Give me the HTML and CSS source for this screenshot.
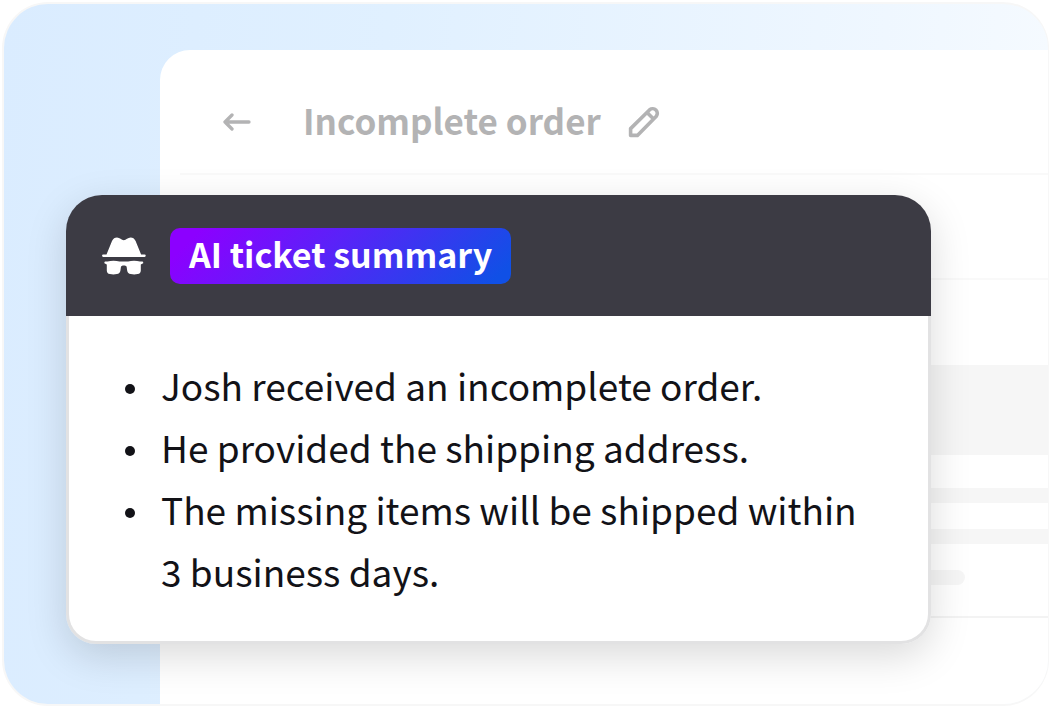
FILE: index.html
```
<!DOCTYPE html>
<html lang="en">
<head>
    <meta charset="UTF-8">
    <meta name="viewport" content="width=device-width, initial-scale=1.0">
    <title>AI ticket summary</title>
    <link rel="stylesheet" href="styles.css">
</head>
<body>
    <main class="stage">
        <section class="ticket">
            <header class="ticket-header">
                <button class="icon-btn back" type="button" aria-label="Back">
                    <svg width="28" height="18" viewBox="0 0 28 18" fill="none" stroke="currentColor" stroke-width="3.300" stroke-linecap="round" stroke-linejoin="round">
                        <path d="M26 9H2M9 2L2 9l7 7"/>
                    </svg>
                </button>
                <h1>Incomplete order</h1>
                <button class="icon-btn edit" type="button" aria-label="Edit title">
                    <svg width="32" height="32" viewBox="0 0 32 32" fill="none" stroke="currentColor" stroke-width="3.600" stroke-linejoin="round">
                        <path d="M2.600 29.400V22.600L21.700 3.700a4.700 4.700 0 0 1 6.600 6.600L9.400 29.400zM19 6.400L25.600 13"/>
                    </svg>
                </button>
            </header>
            <div class="row"></div>
            <div class="row message">
                <div class="block"></div>
                <div class="line"></div>
                <div class="line"></div>
                <div class="line short"></div>
            </div>
        </section>

        <section class="summary">
            <header class="summary-header">
                <svg width="44" height="40" viewBox="0 0 44 40" fill="#fff">
                    <path d="M1.200 18.600H4.500L10 5C11.200 2.500 12.800 1.500 15 1.500c2.800 0 4.400 2.700 6.800 2.700s4-2.700 6.800-2.700c2.200 0 3.800 1 5 3.500L39.100 18.600h3.500a1.100 1.100 0 0 1 0 2.300H1.200a1.100 1.100 0 0 1 0-2.300z"/>
                    <path d="M3.300 25.600H5.600C9 24.600 14 24.600 17.500 25.600h8.600C29.500 24.600 34.500 24.600 38 25.600h2.300a1 1 0 0 1 .4 1.900L38.800 28.600v5.900c0 2-1.100 3.200-3.100 3.600-2.400.4-4.600.4-7 0-2-.4-3.200-1.500-3.500-3.400L24.600 30.500c-.8-1.500-4.800-1.500-5.600 0l-.6 4.200c-.3 1.900-1.500 3-3.500 3.400-2.400.4-4.600.4-7 0-2-.4-3.100-1.600-3.100-3.600V28.600L2.900 27.500A1 1 0 0 1 3.300 25.600z"/>
                </svg>
                <h2>AI ticket summary</h2>
            </header>
            <ul>
                <li>Josh received an incomplete order.</li>
                <li>He provided the shipping address.</li>
                <li>The missing items will be shipped within 3 business days.</li>
            </ul>
        </section>
    </main>
</body>
</html>
```
FILE: styles.css
```
* {
    box-sizing: border-box;
}
body {
    margin: 0;
    background: #fff;
    font-family: "Noto Sans CJK SC", sans-serif;
}
h1, h2, ul {
    margin: 0;
    padding: 0;
}
.stage {
    position: relative;
    height: calc(100vh - 3px);
    margin: 2px 0 0 2px;
    padding: 46px 0 0 156px;
    border: 2px solid #f7f7f7;
    border-right-width: 1px;
    border-radius: 46px;
    background: linear-gradient(95deg, #daecff, #e0f0ff 35%, #eff7ff 80%, #f7fbff);
    overflow: hidden;
}
.ticket {
    height: 100%;
    background: #fff;
    border-top-left-radius: 30px;
}
.ticket-header {
    display: flex;
    align-items: center;
    height: 125px;
    margin-left: 20px;
    padding: 20px 0 0 43px;
    border-bottom: 2px solid #f9f9f9;
    color: #b3b3b4;
}
.ticket-header h1 {
    margin-left: 52px;
    padding-bottom: 4px;
    font-size: 35px;
    font-weight: 700;
    line-height: 48px;
}
.icon-btn {
    display: flex;
    padding: 0;
    border: 0;
    background: none;
    color: inherit;
    cursor: pointer;
}
.edit {
    margin-left: 27px;
}
.row {
    height: 105px;
    border-bottom: 2px solid #f9f9f9;
}
.message {
    height: auto;
    padding: 85px 0 31px;
    border-color: #f3f3f3;
}
.block {
    height: 90px;
    margin-bottom: 33px;
    background: #f6f6f6;
}
.line {
    height: 15px;
    margin-bottom: 26px;
    background: #f6f6f6;
}
.line.short {
    width: calc(100% - 83px);
    margin-bottom: 0;
    border-radius: 8px;
}
/* floats over the ticket */
.summary {
    position: absolute;
    top: 191px;
    left: 62px;
    right: 117px;
    border-radius: 36px 36px 30px 30px;
    box-shadow: 0 12px 40px rgba(0, 0, 0, 0.15);
}
.summary-header {
    display: flex;
    align-items: center;
    gap: 24px;
    height: 121px;
    padding: 0 36px;
    border-radius: 36px 36px 0 0;
    background: #3c3b44;
}
.summary-header h2 {
    padding: 0 19px 4px;
    border-radius: 10px;
    background: linear-gradient(135deg, #8c00ff 8%, #5a22f8 45%, #1050e6 95%);
    color: #fff;
    font-size: 34px;
    font-weight: 700;
    line-height: 52px;
}
.summary ul {
    padding: 38px 56px 39px;
    border: 3px solid #e2e2e3;
    border-top: 0;
    border-radius: 0 0 30px 30px;
    background: #fff;
    color: #121217;
    font-size: 37px;
    line-height: 62px;
    list-style: none;
}
.summary li {
    display: flex;
    gap: 26px;
}
.summary li::before {
    content: "";
    flex: none;
    width: 10px;
    height: 10px;
    margin-top: 30px;
    border-radius: 50%;
    background: #121217;
}
```
